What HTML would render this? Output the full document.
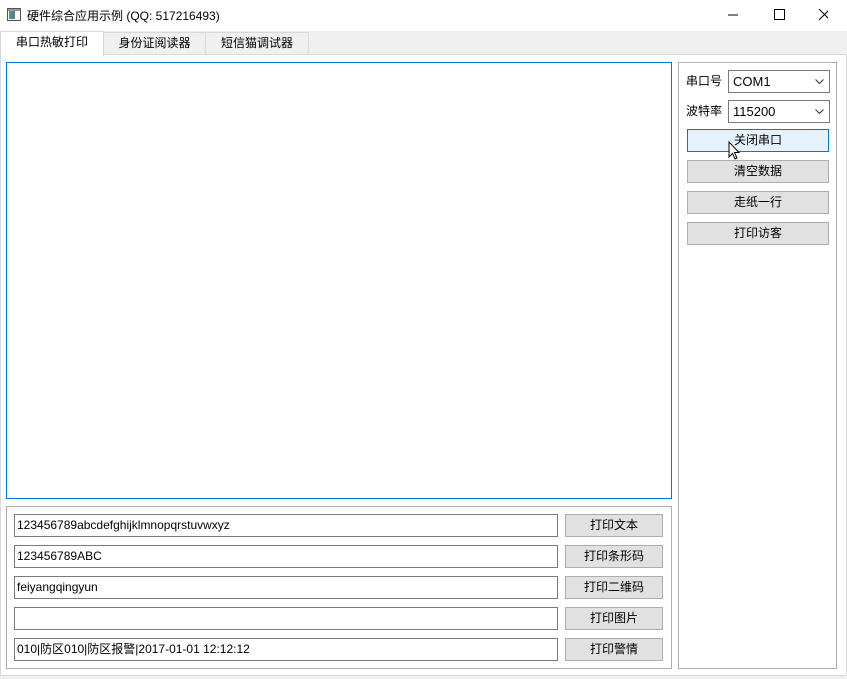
<!DOCTYPE html>
<html><head><meta charset="utf-8"><style>
*{box-sizing:border-box;margin:0;padding:0}
body{width:847px;height:679px;background:#f0f0f0;font-family:"Liberation Sans","Noto Sans CJK SC",sans-serif;font-size:12px;color:#000;position:relative;overflow:hidden}
.a{position:absolute}
.title{left:0;top:0;width:847px;height:31px;background:#fff}
.tab{top:32px;height:23px;border:1px solid #d9d9d9;background:#f0f0f0;text-align:center;line-height:21px;font-size:12px}
.pane{left:0;top:54px;width:847px;height:622px;background:#fff;border:1px solid #d9d9d9}
.inp{left:14px;width:544px;height:23px;border:1px solid #7a7a7a;background:#fff;padding-left:2px;line-height:21px;font-size:12px}
.btn{left:565px;width:98px;height:23px;border:1px solid #adadad;background:#e1e1e1;text-align:center;line-height:21px}
.rb{left:687px;width:142px;height:23px;border:1px solid #adadad;background:#e1e1e1;text-align:center;line-height:21px}
.cb{left:728px;width:102px;height:23px;border:1px solid #7a7a7a;background:#fff;padding-left:4px;line-height:21px;font-size:13px}
.cb svg{position:absolute;right:5px;top:8px}
</style></head><body>
<div class="a title"></div>
<svg class="a" style="left:7px;top:8px" width="14" height="13"><rect x="0.5" y="0.5" width="13" height="12" fill="#fff" stroke="#555"/><rect x="2" y="3" width="3" height="8" fill="#3a6"/><rect x="5" y="3" width="3" height="8" fill="#679"/><rect x="1" y="1" width="12" height="2" fill="#999"/></svg>
<div class="a" style="left:27px;top:7px;font-size:12px">硬件综合应用示例 (QQ: 517216493)</div>
<svg class="a" style="left:728px;top:9px" width="100" height="12"><line x1="0" y1="6" x2="10" y2="6" stroke="#000"/><rect x="46.5" y="0.5" width="10" height="10" fill="none" stroke="#000"/><path d="M91 0L102 11M102 0L91 11" stroke="#000"/></svg>
<div class="a pane"></div>
<div class="a tab" style="left:0;top:31px;width:104px;height:25px;background:#fff;border-bottom:none">串口热敏打印</div>
<div class="a tab" style="left:103px;width:103px">身份证阅读器</div>
<div class="a tab" style="left:205px;width:104px">短信猫调试器</div>
<div class="a" style="left:6px;top:62px;width:666px;height:437px;border:1px solid #0078d7;background:#fff"></div>
<div class="a" style="left:6px;top:506px;width:666px;height:163px;border:1px solid #adadad"></div>
<div class="a" style="left:678px;top:62px;width:159px;height:607px;border:1px solid #adadad"></div>
<div class="a inp" style="top:514px">123456789abcdefghijklmnopqrstuvwxyz</div>
<div class="a inp" style="top:545px">123456789ABC</div>
<div class="a inp" style="top:576px">feiyangqingyun</div>
<div class="a inp" style="top:607px"></div>
<div class="a inp" style="top:638px">010|防区010|防区报警|2017-01-01 12:12:12</div>
<div class="a btn" style="top:514px">打印文本</div>
<div class="a btn" style="top:545px">打印条形码</div>
<div class="a btn" style="top:576px">打印二维码</div>
<div class="a btn" style="top:607px">打印图片</div>
<div class="a btn" style="top:638px">打印警情</div>
<div class="a" style="left:686px;top:72px">串口号</div>
<div class="a" style="left:686px;top:102px">波特率</div>
<div class="a cb" style="top:70px">COM1<svg width="9" height="6"><path d="M0.5 0.5L4.5 4.5L8.5 0.5" fill="none" stroke="#333"/></svg></div>
<div class="a cb" style="top:100px">115200<svg width="9" height="6"><path d="M0.5 0.5L4.5 4.5L8.5 0.5" fill="none" stroke="#333"/></svg></div>
<div class="a rb" style="top:129px;background:#e5f1fb;border-color:#0078d7">关闭串口</div>
<div class="a rb" style="top:160px">清空数据</div>
<div class="a rb" style="top:191px">走纸一行</div>
<div class="a rb" style="top:222px">打印访客</div>
<svg class="a" style="left:728px;top:141px" width="13" height="20"><path d="M1 1L1 16L4.5 12.5L7 18L9 17L6.5 11.5L11 11.5Z" fill="#fff" stroke="#000"/></svg>
</body></html>
